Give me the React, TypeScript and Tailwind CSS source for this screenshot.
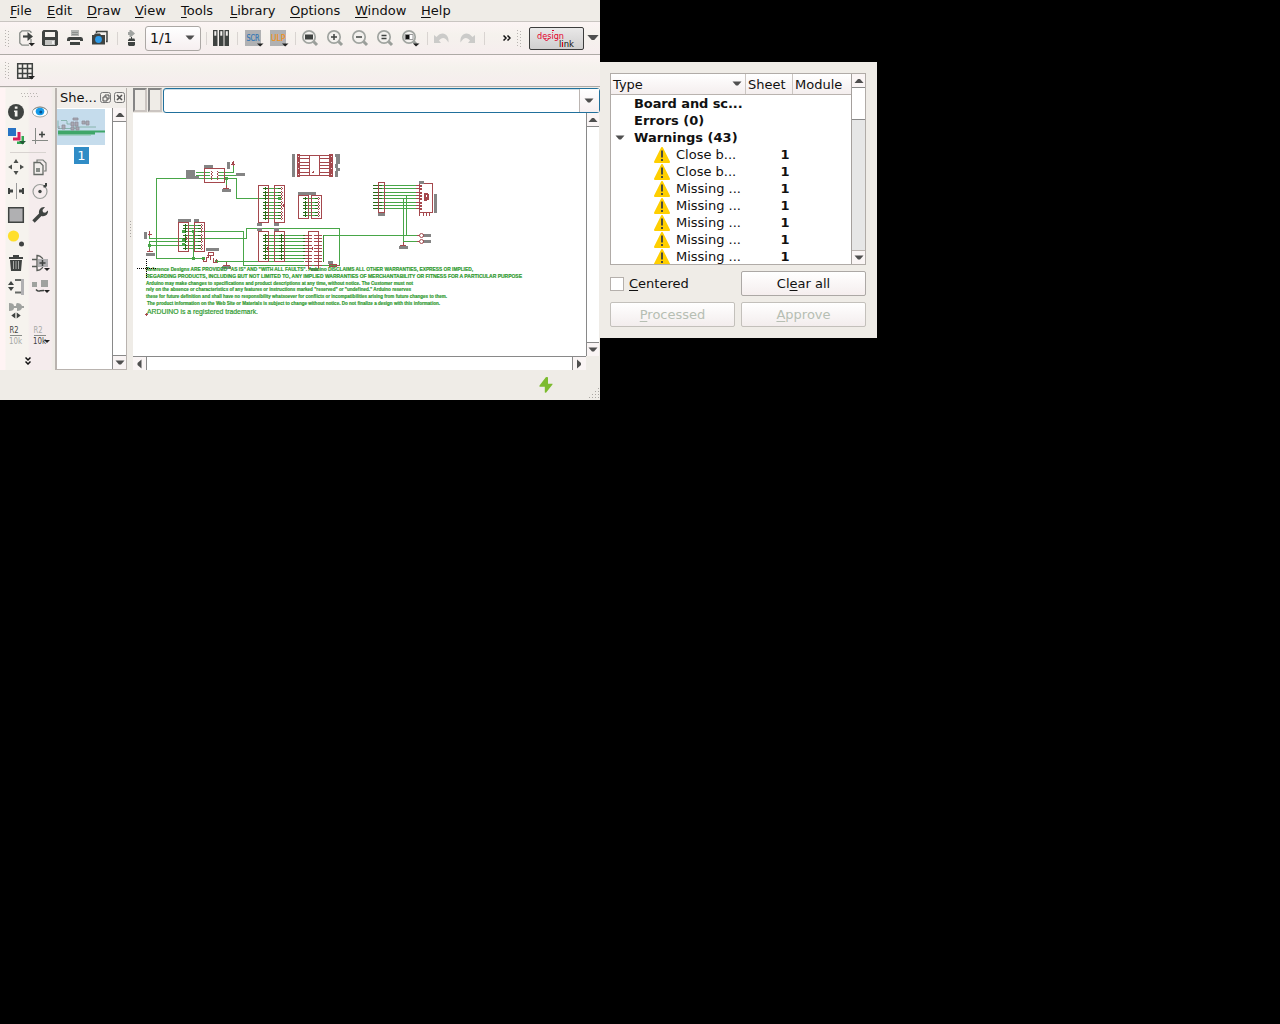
import React from "react";

const INK = "#3f4341";
const RED = "#a5484d";
const GREEN = "#48a648";
const DARK = "#2a6a18";
const GRAY = "#848484";

type Kids = { children?: React.ReactNode };

function Icon({ children, className = "" }: Kids & { className?: string }) {
  return (
    <svg viewBox="0 0 16 16" className={"block h-4 w-4 shrink-0 overflow-visible " + className} fill="none">
      {children}
    </svg>
  );
}

const Drop = () => <path d="M9.500 13h6.500L12.800 16.300z" fill="#222" />;

function Sep({ className = "" }: { className?: string }) {
  return <div className={"h-[13px] w-px shrink-0 bg-[#d9d4d1] " + className} />;
}

function Grip({ className = "" }: { className?: string }) {
  return (
    <svg viewBox="0 0 5 17" className={"block h-[17px] w-[5px] shrink-0 " + className} shapeRendering="crispEdges">
      {[0.5, 3.5].map((x, i) => (
        <path key={x} d={`M${x} ${i}v17`} stroke="#b8b4b0" strokeDasharray="1 2" />
      ))}
    </svg>
  );
}

function Tri({ dir = "down", className = "" }: { dir?: string; className?: string }) {
  const d: Record<string, string> = {
    down: "M0 2h9L5.500 6h-2z",
    up: "M0 6.500h9L5.500 2.500h-2z",
    left: "M6 0v9L2 5.500v-2z",
    right: "M2.500 0v9l4-3.500v-2z",
  };
  return (
    <svg viewBox="0.500 0.500 8 8" className={"block h-2 w-2 shrink-0 overflow-visible " + className}>
      <path d={d[dir]} fill="#4f4f4f" />
    </svg>
  );
}

const menus: [string, string, string][] = [
  ["F", "ile", "w-[37px]"],
  ["E", "dit", "w-[40px]"],
  ["D", "raw", "w-[48px]"],
  ["V", "iew", "w-[46px]"],
  ["T", "ools", "w-[49px]"],
  ["L", "ibrary", "w-[60px]"],
  ["O", "ptions", "w-[65px]"],
  ["W", "indow", "w-[66px]"],
  ["H", "elp", "w-[40px]"],
];

function MenuBar() {
  return (
    <div className="flex h-[22px] border-b border-[#c9c5c1] pl-[10px] leading-[21px]">
      {menus.map(([a, b, w]) => (
        <div key={a} className={"shrink-0 " + w}>
          <span className="underline decoration-1 underline-offset-2">{a}</span>
          {b}
        </div>
      ))}
    </div>
  );
}

function Lens({ children }: Kids) {
  return (
    <Icon>
      <path d="M10.500 10.500l4.500 4.500" stroke="#9a9e9a" strokeWidth="3" />
      <circle cx="7" cy="7" r="6.200" fill="#f3f1ee" stroke="#a0a4a0" strokeWidth="1.700" />
      {children}
    </Icon>
  );
}

function TopToolbar() {
  return (
    <div className="flex h-[33px] items-center border-b border-[#aeaaa6] bg-gradient-to-b from-[#fcf4f4] via-[#f5f2ed] via-40% to-[#f6edee]">
      <Grip className="ml-[5px]" />
      <Icon className="ml-[9px]">
        <path d="M12 3V2L10.500.800H3L.800 3v10L3 15.200h7M12 9v4" stroke="#858985" strokeWidth="1.300" />
        <path d="M4 6.500h6" stroke={INK} strokeWidth="2.200" />
        <path d="M8.500 2l5.500 4.500L8.500 11z" fill={INK} />
        <Drop />
      </Icon>
      <Icon className="ml-[7px]">
        <path d="M1.500 0h13L16 1.500v13L14.500 16h-13L0 14.500v-13z" fill={INK} />
        <path d="M3 2h10v5H3z" fill="#f5f2ee" />
        <path d="M3 10h10v5H3z" fill="#c4c4c2" />
        <path d="M10 11h2v3h-2z" fill="#eee" />
      </Icon>
      <Icon className="ml-[9px]">
        <path d="M4 0h8v6H4z" fill="#b2b5b2" />
        <path d="M5 2.500h6M5 4.500h6" stroke="#8d908d" />
        <path d="M0 9.500Q0 7 2 7h12q2 0 2 2.500V11h-3v-1H3v1H0z" fill={INK} />
        <path d="M3 12h10v3H3z" fill={INK} />
      </Icon>
      <Icon className="ml-[9px]">
        <path d="M4.500 3V1.500H15v10h-1" stroke={INK} strokeWidth="1.500" />
        <path d="M0 5h2l1-1.500h5L9 5h4v9.500H0z" fill={INK} />
        <circle cx="6.500" cy="9.500" r="3.400" fill="#2c9bea" />
      </Icon>
      <Sep className="ml-[9px]" />
      <Icon className="ml-[5px]">
        <path d="M6.500 0h1.500l4 3.500L8 7H6.500V5H5V2h1.500z" fill="#a0a3a0" />
        <path d="M8.500 7v2" stroke={INK} />
        <path d="M6 8.500h5.500v1H12V11H5V9.500h1zM5 12h7v3.500h-1v.5H6v-.5H5z" fill={INK} />
      </Icon>
      <div className="ml-[6px] flex h-[25px] w-[56px] shrink-0 items-center justify-between rounded-[3px] border border-[#aca8a5] bg-gradient-to-b from-white to-[#f6eff0] pl-1 pr-[6px] text-sm leading-none">
        <span>1/1</span>
        <Tri />
      </div>
      <Sep className="ml-[5px]" />
      <Icon className="ml-[6px]">
        {[0, 6, 11.5].map((x) => (
          <g key={x}>
            <path d={`M${x} 0h4.500v16h-4.500z`} fill={INK} />
            <path d={`M${x + 1.3} 1.200h2v4.500h-2z`} fill="#f2f0ee" />
          </g>
        ))}
      </Icon>
      <Sep className="ml-[8px]" />
      <Icon className="ml-[7px]">
        <path d="M0 0h16v16H0z" fill="#b0b1b3" />
        <text x="1.500" y="11" fontSize="8.500" textLength="13" lengthAdjust="spacingAndGlyphs" fill="#2f76b5" stroke="#2f76b5" strokeWidth=".2">SCR</text>
        <path d="M12 13.500h6.500L15.200 16.500z" fill="#222" />
      </Icon>
      <Icon className="ml-[9px]">
        <path d="M0 0h16v16H0z" fill="#b0b1b3" />
        <text x="1" y="11" fontSize="8.500" textLength="14.500" lengthAdjust="spacingAndGlyphs" fill="#f0921a" stroke="#f0921a" strokeWidth=".2">ULP</text>
        <path d="M12 13.500h6.500L15.200 16.500z" fill="#222" />
      </Icon>
      <Sep className="ml-[9px]" />
      <div className="ml-[6px] flex shrink-0 gap-[9px]">
        <Lens><path d="M3 4.500h8v5H3z" fill={INK} /></Lens>
        <Lens><path d="M4 7h6M7 4v6" stroke={INK} strokeWidth="1.500" /></Lens>
        <Lens><path d="M4 7h6" stroke={INK} strokeWidth="1.500" /></Lens>
        <Lens><path d="M4.500 5.500h5M4.500 8.500h5" stroke={INK} strokeWidth="1.300" /></Lens>
        <Lens>
          <path d="M3 4.500h8v5H3z" fill="#fff" stroke="#999" />
          <path d="M3.500 5h4v4h-4z" fill="#111" />
          <path d="M11 13.500h6.500L14 16.500z" fill="#222" />
        </Lens>
      </div>
      <Sep className="ml-[9px]" />
      <Icon className="ml-[6px]">
        <path d="M0 5v8h7L5 10.500C8 7 11 7 14.500 12.500 15.500 4 8 0 2.500 7z" fill="#cbcbc9" />
      </Icon>
      <Icon className="ml-[9px]">
        <path d="M16 5v8H9l2-2.500C8 7 5 7 1.500 12.500.500 4 8 0 13.500 7z" fill="#cbcbc9" />
      </Icon>
      <Sep className="ml-[9px]" />
      <svg viewBox="0 0 8 6" className="ml-[18px] h-[6px] w-2 shrink-0" fill="none" stroke="#111" strokeWidth="1.500">
        <path d="M.500.500L3 3 .500 5.500M4.500.500L7 3 4.500 5.500" />
      </svg>
      <Grip className="ml-[6px]" />
      <div className="ml-[7px] h-[23px] w-[55px] shrink-0 rounded-[2px] border border-[#3c3c3c] bg-gradient-to-b from-[#e9e8e8] to-[#d0cfcf]">
        <svg viewBox="0 0 53 21" className="block h-[21px] w-[53px]">
          <text x="7" y="11" fontSize="9.500" textLength="27" lengthAdjust="spacingAndGlyphs" fill="#e3002b">design</text>
          <text x="29" y="19" fontSize="9" textLength="15" lengthAdjust="spacingAndGlyphs" fill="#111">link</text>
          <path d="M14 10.500l2.500 2.500 2.500-2.500M22 3l1-1 1 1M32.500 14v5" fill="none" stroke="#e3002b" />
        </svg>
      </div>
      <Tri className="ml-[4px] h-[10px] w-[10px]" />
    </div>
  );
}

function GridToolbar() {
  return (
    <div className="flex h-8 items-center border-b border-[#aeaaa6] bg-gradient-to-b from-[#fcf4f4] via-[#f5f2ed] via-40% to-[#f6edee]">
      <Grip className="ml-[5px]" />
      <Icon className="ml-[7px]">
        <path d="M.700.700h14.600v14.600H.700zM5.500 0v16M10.500 0v16M0 5.500h16M0 10.500h16" stroke={INK} strokeWidth="1.500" />
        <path d="M11 13h7l-3.500 3.500z" fill="#222" />
      </Icon>
    </div>
  );
}

function ToolGrid({ children, className = "" }: Kids & { className?: string }) {
  return <div className={"grid grid-cols-[16px_16px] gap-2 pl-2 " + className}>{children}</div>;
}

function SideToolbar() {
  return (
    <div className="flex w-[55px] shrink-0 flex-col bg-[linear-gradient(90deg,#fff4f4_0,#fff4f4_5px,#f6f3ee_6px,#f6f3ee_28px,#f5eced_30px,#f5eced_51px,#efece7_53px)]">
      <svg viewBox="0 0 17 5" className="ml-[21px] mt-[5px] h-[5px] w-[17px]" shapeRendering="crispEdges">
        <path d="M0 .500h17M1 3.500h16" stroke="#b8b4b0" strokeDasharray="1 2" />
      </svg>
      <ToolGrid className="mt-[6px]">
        <Icon>
          <circle cx="8" cy="8" r="8" fill={INK} />
          <path d="M6.800 2.500h2.700v2.300H6.800zM6 6.500h3.500v6h-2.700V8H6z" fill="#f4f2ee" />
        </Icon>
        <Icon>
          <ellipse cx="8" cy="8" rx="7.600" ry="5" fill="#fff" stroke="#a5a8a5" />
          <path d="M1.500 5.500Q8 .500 14.500 5.500" stroke="#8c908d" />
          <ellipse cx="8" cy="7.500" rx="4.300" ry="3.700" fill="#159bea" />
          <circle cx="8.800" cy="8" r="1.500" fill="#06508d" />
        </Icon>
        <Icon>
          <path d="M0 0h8v8H0z" fill="#2873c4" />
          <path d="M9.500 4h3v8.500H5V9.500h4.500z" fill="#d91e5b" />
          <path d="M13.500 8H16v8H9v-2.500h4.500z" fill="#32a853" />
          <path d="M11 13h7l-3.500 3.500z" fill="#245b37" />
        </Icon>
        <Icon>
          <path d="M3.500 0v16M0 12.500h16" stroke="#858985" />
          <path d="M7 6.500h6M10 3.500v6" stroke={INK} strokeWidth="1.500" />
        </Icon>
      </ToolGrid>
      <div className="ml-[10px] mt-2 h-px w-9 bg-[#d8d3d0]" />
      <ToolGrid className="mt-[6px]">
        <Icon>
          <path d="M8 0l2.500 4h-5zM8 16l2.500-4h-5zM0 8l4-2.500v5zM16 8l-4-2.500v5z" fill="#4b4e4b" />
        </Icon>
        <Icon>
          <path d="M5 3V1h6l3 3v8h-2" stroke="#777b77" strokeWidth="1.200" />
          <path d="M2 3.500h6l3 3v9H2z" fill="#f2eeec" stroke="#666a66" strokeWidth="1.300" />
          <path d="M4 9h4v4H4z" fill="#888c88" />
        </Icon>
        <Icon>
          <path d="M8.500 0v16" stroke="#999" />
          <path d="M0 5h2v1.500h3v3H2V11H0zM16 5h-2v1.500h-3v3h3V11h2z" fill={INK} />
        </Icon>
        <Icon>
          <circle cx="8" cy="8.500" r="7" stroke="#9a9d9a" strokeWidth="1.200" />
          <circle cx="8" cy="8.500" r="1.700" fill={INK} />
          <path d="M11.500 4.500V2H13V0h2v3l-1.500 1.500z" fill={INK} />
        </Icon>
        <Icon>
          <path d="M.700.700h14.600v14.600H.700z" fill="#b0b0b2" stroke={INK} strokeWidth="1.500" />
        </Icon>
        <Icon>
          <path d="M1.500 14.500L10 6" stroke={INK} strokeWidth="3.400" />
          <path d="M13 0L10.500 3l.500 2.200 2.200.500L16 3.500c.500 4-3 6.500-6.500 5.500L7 6.500C6.500 2.500 9-.500 13 0z" fill={INK} />
        </Icon>
        <Icon>
          <circle cx="5.500" cy="5" r="5.600" fill="#ffdf2b" />
          <circle cx="13.500" cy="13" r="2.500" fill={INK} />
        </Icon>
        <span />
        <Icon>
          <path d="M2 5h12l-1 11H3zM1 2h14v2H1zM5 0h6v2H5z" fill={INK} />
          <path d="M5.500 6v8M8 6v8M10.500 6v8" stroke="#a7aaa7" />
        </Icon>
        <Icon>
          <path d="M0 4.500h5M0 11.500h5M5 .500v15C14 15.500 14 .500 5 .500z" stroke="#575b57" strokeWidth="1.300" />
          <path d="M6 4h10v8H6z" fill="#b0b0b2" />
          <path d="M7.500 8h6M10.500 5v6" stroke={INK} strokeWidth="1.500" />
          <path d="M12 13h6l-3 3z" fill="#222" />
        </Icon>
        <Icon>
          <path d="M3 2l3 4H0zM3 12l3-4H0z" fill={INK} />
          <path d="M7 0h6v2H7zM7 12.500h6v2H7z" fill="#666a66" />
          <path d="M14.500 0v16" stroke="#b0b0b2" strokeWidth="3" />
        </Icon>
        <Icon>
          <path d="M0 3h5v5H0zM9 1h7v7H9z" fill="#9fa29f" />
          <path d="M4 10.500q2 2.500 4.500 1.200L12 11.500" stroke={INK} strokeWidth="1.400" />
          <path d="M12 11h6l-3 3z" fill="#222" />
        </Icon>
        <Icon>
          <path d="M1 0q5 0 5 3h2q0-3 1-3 4 0 5 3h2v2h-2q-1 3-5 3V5H6q0 3-5 3z" fill="#9fa29f" />
          <path d="M7.300 9.500v6l-4-3zM8.700 9.500v6l4-3z" fill={INK} />
        </Icon>
        <span />
        <Icon>
          <text x="1.500" y="6" fontSize="8" textLength="9" lengthAdjust="spacingAndGlyphs" fill={INK}>R2</text>
          <path d="M2 8.500h12" stroke="#888c88" />
          <text x="1" y="16.500" fontSize="8" textLength="13" lengthAdjust="spacingAndGlyphs" fill="#a5a8a5">10k</text>
        </Icon>
        <Icon>
          <text x="1.500" y="6" fontSize="8" textLength="9" lengthAdjust="spacingAndGlyphs" fill="#a5a8a5">R2</text>
          <path d="M2 8.500h12" stroke="#888c88" />
          <text x="1" y="16.500" fontSize="8" textLength="13" lengthAdjust="spacingAndGlyphs" fill={INK}>10k</text>
          <path d="M12 13h6l-3 3z" fill="#222" />
        </Icon>
      </ToolGrid>
      <svg viewBox="0 0 6 8" className="ml-[25px] mt-[14px] h-2 w-[6px]" fill="none" stroke="#111" strokeWidth="1.500">
        <path d="M.500.500L3 3 5.500.500M.500 4.500L3 7l2.500-2.500" />
      </svg>
    </div>
  );
}

function SheetsDock() {
  return (
    <div className="flex w-[72px] shrink-0 flex-col border-l-2 border-r border-[#b9b3af]">
      <div className="flex h-5 items-center bg-[#f1eeea] pl-[3px]">
        <span className="w-[40px]">She...</span>
        <svg viewBox="0 0 26 12" className="h-3 w-[26px]" fill="none" stroke="#555">
          <rect x=".500" y=".500" width="10" height="10" rx="2" stroke="#777" />
          <path d="M5 5V3h4v4H7M3 5h4v4H3z" />
          <rect x="14.500" y=".500" width="10" height="10" rx="2" stroke="#777" />
          <path d="M17 3l5 5M22 3l-5 5" strokeWidth="1.600" />
        </svg>
      </div>
      <div className="flex flex-1 border-b border-[#b9b3af] bg-white">
        <div className="flex w-[55px] flex-col items-center">
          <svg viewBox="57 109 48 36" className="mr-[7px] mt-px h-9 w-12">
            <path d="M57 109h48v36H57z" fill="#c5dcec" />
            <path d="M58 130.500h47v2H95v1.300H58zM58 133.500h37v1H58z" fill="#3fa669" />
            <path d="M58 134.500h33v1H58z" fill="#7cbf9c" />
            <path d="M58 128.500h18M58 120.500V128M61 120.500h6M67 121v3h5M73 127h23M84 123h4" stroke="#78ab9f" strokeWidth=".800" fill="none" />
            <path d="M59 126v3M62 125h3v4h-3zM71 122h3v4h-3zM75 122h3v4h-3zM71 127h3v3h-3zM76 127h3v3h-3zM73 118h5v2h-5zM82 121h3v3h-3zM86 121h3v4h-3z" stroke="#8f8d99" strokeWidth=".800" fill="#a9a8b2" />
          </svg>
          <div className="mr-[6px] mt-[2px] h-[17px] w-[15px] bg-[#308cc6] text-center leading-[17px] text-white">1</div>
        </div>
        <div className="flex w-[14px] flex-col justify-between border-l border-[#898989]">
          <div className="flex h-[14px] items-center justify-center border-b border-[#898989] bg-[#f9f4f4]"><Tri dir="up" /></div>
          <div className="flex h-[14px] items-center justify-center border-t border-[#898989] bg-[#f9f4f4]"><Tri /></div>
        </div>
      </div>
    </div>
  );
}

const rows10 = [188, 192, 195, 198, 202, 205, 208, 212, 215, 218];
const rowsLow = [235, 238, 241, 245, 248, 251, 255, 258];
const rowsLeft = [225, 228, 231, 235, 238, 241, 245, 248];
const rowsMid = [198, 202, 205, 208, 212, 215];
const rowsRight = [185, 188, 192, 195, 198, 202, 205, 208];

const boxes: [number, number, number, number][] = [
  [204, 168, 20, 14],
  [258, 185, 10, 37],
  [274, 185, 10, 37],
  [258, 231, 10, 30],
  [274, 231, 10, 30],
  [308, 231, 10, 37],
  [178, 222, 10, 29],
  [194, 222, 10, 29],
  [298, 195, 10, 23],
  [311, 195, 10, 23],
  [378, 182, 6, 30],
  [419, 183, 13, 29],
];

const labels: [number, number, number, number][] = [
  [186, 170, 9, 9], [195, 176, 4, 3], [204, 165, 9, 3], [227, 162, 3, 7], [236, 173, 9, 3],
  [222, 189, 9, 3], [257, 223, 5, 3], [274, 223, 5, 3], [257, 228, 5, 3], [274, 228, 5, 3],
  [178, 219, 13, 3], [194, 219, 5, 3], [144, 232, 3, 7], [146, 253, 9, 3], [206, 248, 13, 3],
  [222, 266, 9, 3], [292, 154, 3, 23], [335, 154, 5, 3], [336, 157, 4, 7], [335, 164, 3, 4],
  [336, 168, 4, 3], [335, 171, 3, 6], [298, 192, 18, 3], [328, 261, 5, 3], [311, 268, 7, 3],
  [378, 213, 7, 3], [419, 181, 5, 3], [434, 194, 3, 19], [423, 234, 8, 3], [423, 240, 8, 3],
  [399, 246, 9, 3],
];

const nodes = [[225, 177], [148, 244], [182, 230], [182, 239], [182, 243], [192, 230], [192, 257], [202, 257], [278, 197], [215, 260]];

const notes: [string, number, number, number][] = [
  ["Reference Designs ARE PROVIDED \"AS IS\" AND \"WITH ALL FAULTS\". Arduino DISCLAIMS ALL OTHER WARRANTIES, EXPRESS OR IMPLIED,", 146, 271, 327],
  ["REGARDING PRODUCTS, INCLUDING BUT NOT LIMITED TO, ANY IMPLIED WARRANTIES OF MERCHANTABILITY OR FITNESS FOR A PARTICULAR PURPOSE", 146, 278, 376],
  ["Arduino may make changes to specifications and product descriptions at any time, without notice. The Customer must not", 146, 285, 267],
  ["rely on the absence or characteristics of any features or instructions marked \"reserved\" or \"undefined.\" Arduino reserves", 146, 291, 265],
  ["these for future definition and shall have no responsibility whatsoever for conflicts or incompatibilities arising from future changes to them.", 146, 298, 301],
  ["The product information on the Web Site or Materials is subject to change without notice. Do not finalize a design with this information.", 147, 305, 293],
];

const ticks = (x: number, w: number, ys: number[]) => ys.map((y) => `M${x} ${y + 0.5}h${w}`).join("");
const posts = (x: number, ys: number[]) => ys.map((y) => `M${x + 0.5} ${y - 1}v3`).join("");
const hooks = (x: number, ys: number[]) =>
  ys.map((y) => `M${x} ${y - 0.5}h1M${x + 1} ${y + 0.5}h1M${x} ${y + 1.5}h1`).join("");

function Schematic() {
  return (
    <svg viewBox="133 113 453 243" className="block h-[243px] w-[453px] bg-white" fill="none">
      <g shapeRendering="crispEdges">
        <g stroke={GREEN}>
          <path d="M196 172.500h14M196 175.500h14M225 178.500H156.500V258.500H204M218 172.500h15.500V165M218 175.500h18M218 178.500h18.500v20H281M226.500 178v8" />
          <path d={ticks(264, 17, rows10) + ticks(264, 40, rowsLow) + ticks(184, 17, rowsLeft) + ticks(304, 14, rowsMid) + ticks(373, 45, rowsRight)} />
          <path d="M149.500 234v4.500H246.500V228.500H339.500V265.500H243.500V231.500H193.500V258M184 241.500H149.500V252M149 245.500h35M216 261.500H304M323 235.500H417M403.500 198V245M406.500 195V235.500M403 241.500h14M322.500 265.500h17M226.500 261v3" />
        </g>
        <g stroke={DARK}>
          <path d={ticks(263, 5, rows10) + ticks(278, 3, rows10) + ticks(263, 5, rowsLow) + ticks(279, 5, rowsLow) + ticks(303, 3, rowsLow) + ticks(183, 4, rowsLeft) + ticks(198, 3, rowsLeft) + ticks(303, 4, rowsMid) + ticks(315, 3, rowsMid) + ticks(373, 9, rowsRight)} />
          <path d={posts(265, rows10) + posts(265, rowsLow) + posts(281, rowsLow) + posts(185, rowsLeft) + posts(305, rowsMid)} />
          <path d="M323.500 235v27" stroke="#3c8b32" />
        </g>
        {nodes.map(([x, y]) => <path key={`${x}-${y}`} d={`M${x} ${y}h3v3h-3z`} fill={GREEN} />)}
        <g stroke={RED}>
          {boxes.map(([x, y, w, h]) => <rect key={`${x}-${y}`} x={x + 0.5} y={y + 0.5} width={w} height={h} />)}
          <path d={hooks(281, rows10) + hooks(201, rowsLeft) + hooks(318, rowsMid) + hooks(211, [172, 175, 178]) + hooks(217, [172, 175, 178])} />
          <path d={ticks(305, 7, [...rowsLow, 261, 265]) + ticks(314, 8, [...rowsLow, 261, 265]) + ticks(416, 4, rowsRight)} />
          <path d={ticks(300, 9, [158, 162, 165, 168, 172]) + ticks(320, 9, [158, 162, 165, 168, 172])} />
          <path d="M300 155.500h29M300 175.500h29M309.500 155v20M319.500 155v20M312 172.500h1M313.500 171v2" />
          <path d="M419.500 213v3M423.500 213v3M426.500 213v3M429.500 213v3" />
          <path d="M223 188.500h6M226.500 185v4M147 251.500h6M149.500 249v3M223 265.500h7M226.500 262v4M400 245.500h6M403.500 242v3" />
          <path d="M231 164.500h4M232.500 162v3M233.500 161v5M148 234.500h4M149.500 231v5M266 205.500h2M283.500 204v3M267.500 247v3M186.500 237v3M312.500 247v3M384.500 194v3" />
          <path d="M203.500 262v-3M203 261.500h3v-4M207 255.500h6v-3h-5v4M210 255v5M206 257.500h3M213 258v4h3v-3M329.500 264.500h7v2h-7zM332.500 264v3M337 265.500h2.500" />
          <path d="M145 314.500h3M146.500 313v3" />
        </g>
        <path d="M297 154h3v23h-3zM329 154h4v23h-4z" fill={RED} />
        <path d="M298.500 156v20M331.500 156v20" stroke="#f5e5e5" strokeDasharray="1 5" />
        <path d={rowsRight.map((y) => `M420 ${y}h2v2h-2z`).join("")} fill={RED} />
        <path d="M424 193h4v1h1v6h-2v1h-3zM426 195v2h1v-2z" fillRule="evenodd" fill={RED} />
        {labels.map(([x, y, w, h]) => <rect key={`${x}-${y}`} x={x} y={y} width={w} height={h} fill={GRAY} />)}
      </g>
      <g stroke={RED}>
        <circle cx="421.500" cy="235.500" r="2" />
        <circle cx="421.500" cy="241.500" r="2" />
        <path d="M417 235.500h2.500M417 241.500h2.500" />
      </g>
      <g fill="#2f9a2f" stroke="#2f9a2f" strokeWidth=".200" fontFamily="Liberation Sans, sans-serif">
        {notes.map(([t, x, y, w]) => (
          <text key={y} x={x} y={y} fontSize="5.600" fontWeight="bold" textLength={w} lengthAdjust="spacingAndGlyphs">{t}</text>
        ))}
        <text x="147" y="314" fontSize="7" textLength="111" lengthAdjust="spacingAndGlyphs">ARDUINO is a registered trademark.</text>
      </g>
      <path d="M137 268.500h19M146.500 259v19" stroke="#000" strokeDasharray="1 1" shapeRendering="crispEdges" />
    </svg>
  );
}

function Editor() {
  return (
    <div className="flex min-w-0 flex-1 flex-col">
      <div className="flex h-[25px] shrink-0">
        <div className="mr-px h-6 w-[14px] border-2 border-b-[#cbc5c1] border-l-[#858585] border-r-[#cbc5c1] border-t-[#858585]" />
        <div className="mr-px h-6 w-[14px] border-2 border-b-[#cbc5c1] border-l-[#858585] border-r-[#cbc5c1] border-t-[#858585]" />
        <div className="flex flex-1 rounded-[3px] border border-[#21709c] bg-white shadow-[inset_0_1px_0_#cddde6]">
          <div className="flex-1" />
          <div className="flex w-5 items-center justify-center border-l border-[#bbb5b2] bg-gradient-to-b from-white to-[#f6eff0]"><Tri className="mr-px" /></div>
        </div>
      </div>
      <div className="flex h-[243px] shrink-0">
        <Schematic />
        <div className="flex w-[13px] shrink-0 flex-col justify-between border-l border-[#898989] bg-white">
          <div className="flex h-[14px] items-center justify-center border-b border-[#898989] bg-[#faf5f5]"><Tri dir="up" /></div>
          <div className="flex h-[14px] items-center justify-center border-t border-[#898989] bg-[#faf5f5]"><Tri /></div>
        </div>
      </div>
      <div className="flex h-[14px] w-[453px] shrink-0 justify-between border-t border-[#898989] bg-white">
        <div className="flex w-[14px] items-center justify-center border-r border-[#898989] bg-[#faf5f5]"><Tri dir="left" /></div>
        <div className="flex w-[14px] items-center justify-center border-l border-[#898989] bg-[#faf5f5]"><Tri dir="right" className="mr-px" /></div>
      </div>
    </div>
  );
}

function MainWindow() {
  return (
    <div className="absolute left-0 top-0 flex h-[400px] w-[600px] flex-col overflow-hidden bg-[#efece7]">
      <MenuBar />
      <TopToolbar />
      <GridToolbar />
      <div className="mt-px flex h-[282px] shrink-0">
        <SideToolbar />
        <SheetsDock />
        <div className="flex w-[6px] items-center pl-[3px]">
          <svg viewBox="0 0 2 17" className="h-[17px] w-[2px]" shapeRendering="crispEdges">
            <path d="M.500 0v17" stroke="#aaa6a2" strokeDasharray="1 2" />
          </svg>
        </div>
        <Editor />
      </div>
      <div className="flex flex-1 justify-end">
        <svg viewBox="0 0 14 16" className="mr-[35px] mt-[7px] h-4 w-[14px]">
          <path d="M7 0L.5 8.500v1.200H5.800V15.500l1.200.3L13.500 7.500V6.700H9V.300z" fill="#7cbb2e" />
        </svg>
        <svg viewBox="0 0 12 12" className="mt-[18px] h-3 w-3" shapeRendering="crispEdges">
          <path d="M10 .500h1M7 3.500h5M4 6.500h8M1 9.500h11" stroke="#aaa6a2" strokeDasharray="1 2" />
        </svg>
      </div>
    </div>
  );
}

function Warn() {
  return (
    <svg viewBox="0 0 16 16" className="mr-[6px] h-4 w-4 shrink-0">
      <path d="M8 1l7 14H1z" fill="#ffcf00" stroke="#ffcf00" strokeWidth="2" strokeLinejoin="round" />
      <path d="M7 3.500h2v7H7zM7 12h2v2H7z" fill="#4b4e3f" />
    </svg>
  );
}

const warnings = ["Close b...", "Close b...", "Missing ...", "Missing ...", "Missing ...", "Missing ...", "Missing ..."];

function ErrorsWindow() {
  return (
    <div className="absolute left-[600px] top-[62px] h-[276px] w-[277px] bg-[#efece7] px-[10px] pt-[11px]">
      <div className="flex h-[192px] w-64 border border-[#b0aba7] bg-white">
        <div className="flex w-[240px] flex-col overflow-hidden">
          <div className="flex h-[21px] shrink-0 border-b border-[#b9b3af] bg-gradient-to-b from-white to-[#f4eeee] leading-[21px]">
            <div className="flex w-[135px] items-center justify-between border-r border-[#cbc6c2] pl-[2px] pr-1">
              Type<Tri />
            </div>
            <div className="w-[47px] border-r border-[#cbc6c2] pl-[2px]">Sheet</div>
            <div className="pl-[2px]">Module</div>
          </div>
          <div className="h-[17px] shrink-0 pl-[23px] font-bold leading-[17px] tracking-[-0.1px]">Board and sc...</div>
          <div className="h-[17px] shrink-0 pl-[23px] font-bold leading-[17px]">Errors (0)</div>
          <div className="flex h-[17px] shrink-0 items-center pl-[5px] font-bold leading-[17px]">
            <Tri className="mr-[10px]" />Warnings (43)
          </div>
          {warnings.map((w, i) => (
            <div key={i} className="flex h-[17px] shrink-0 items-center pl-[43px] leading-[17px]">
              <Warn />
              <span className="w-[104.500px]">{w}</span>
              <b>1</b>
            </div>
          ))}
        </div>
        <div className="flex w-[14px] flex-col border-l border-[#a5a09d] bg-[#e6e6e6]">
          <div className="flex h-[13px] items-center justify-center bg-[#faf5f5]"><Tri dir="up" /></div>
          <div className="h-[33px] border-y border-[#898989] bg-white" />
          <div className="flex-1" />
          <div className="flex h-[14px] items-center justify-center border-t border-[#b9b3af] bg-[#faf5f5]"><Tri /></div>
        </div>
      </div>
      <div className="mt-[6px] flex h-[25px] items-center">
        <div className="mr-[5px] h-[14px] w-[14px] border border-[#b5b0ac] bg-white" />
        <span className="w-[112px]"><u className="underline-offset-2">C</u>entered</span>
        <button className="h-[25px] w-[125px] rounded-[2px] border border-[#aca8a5] bg-gradient-to-b from-white to-[#f5eeee]">Cl<u className="underline-offset-2">e</u>ar all</button>
      </div>
      <div className="mt-[6px] flex gap-[6px] text-[#b6beb3]">
        <button className="h-[25px] w-[125px] rounded-[2px] border border-[#c3c0bb] bg-gradient-to-b from-white to-[#f3eded]"><u className="underline-offset-2">P</u>rocessed</button>
        <button className="h-[25px] w-[125px] rounded-[2px] border border-[#c3c0bb] bg-gradient-to-b from-white to-[#f3eded]"><u className="underline-offset-2">A</u>pprove</button>
      </div>
    </div>
  );
}

export default function App() {
  return (
    <div className="relative h-[1024px] w-[1280px] overflow-hidden bg-black font-['DejaVu_Sans',sans-serif] text-[13px] text-[#111]">
      <MainWindow />
      <ErrorsWindow />
    </div>
  );
}
